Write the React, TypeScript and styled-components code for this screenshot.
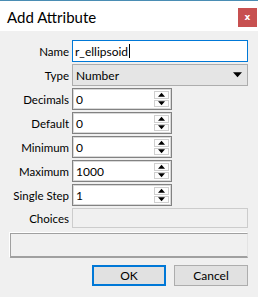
import React from "react";
import styled, { createGlobalStyle } from "styled-components";

const GlobalStyle = createGlobalStyle`
  html, body {
    margin: 0;
    padding: 0;
    background: #f0f0f0;
  }
  * {
    box-sizing: border-box;
  }
`;

const Window = styled.div`
  width: 258px;
  height: 297px;
  background: #f0f0f0;
  border-top: 1px solid #4a8db4;
  font-family: Lato, "Liberation Sans", sans-serif;
  font-size: 12px;
  color: #000;
  display: flex;
  flex-direction: column;
`;

const TitleBar = styled.div`
  height: 30px;
  background: #fff;
  display: flex;
  align-items: flex-start;
  padding-left: 7px;
`;

const Title = styled.span`
  font-size: 15px;
  line-height: 15px;
  margin-top: 9px;
`;

const CloseButton = styled.div`
  margin-left: auto;
  margin-top: 7px;
  margin-right: 1px;
  width: 19px;
  height: 19px;
  background: #c75050;
  color: #fff;
  font-family: "DejaVu Sans", sans-serif;
  font-weight: bold;
  font-size: 9px;
  line-height: 18px;
  text-align: center;
`;

const Body = styled.div`
  padding: 9px 10px 0 10px;
  display: flex;
  flex-direction: column;
`;

const Form = styled.div`
  display: grid;
  grid-template-columns: 59px 1fr;
  column-gap: 3px;
  row-gap: 2px;
  align-items: center;
`;

const Label = styled.span`
  text-align: right;
  white-space: nowrap;
  font-size: 11.5px;
`;

const LineEdit = styled.div<{ focused?: boolean; disabled?: boolean }>`
  height: ${(p) => (p.disabled ? "20px" : "22px")};
  border: 1px solid ${(p) => (p.focused ? "#0078d7" : p.disabled ? "#cccccc" : "#7a7a7a")};
  background: ${(p) => (p.disabled ? "#f0f0f0" : "#fff")};
  display: flex;
  align-items: center;
  padding-left: 2px;
`;

const Caret = styled.span`
  display: inline-block;
  width: 1px;
  height: 14px;
  background: #000;
  margin-left: 1px;
`;

const Combo = styled.div`
  height: 22px;
  border: 1px solid #adadad;
  background: #e5e5e5;
  display: flex;
  align-items: center;
  justify-content: space-between;
  padding: 0 5px 0 3px;
`;

const SpinBox = styled.div`
  width: 100px;
  height: 22px;
  border: 1px solid #828282;
  box-shadow: inset 0 0 0 1px #d9d9d9;
  background: #fff;
  display: flex;
  align-items: center;
  padding: 2px;
`;

const SpinValue = styled.span`
  flex: 1;
  padding-left: 1px;
`;

const SpinButtons = styled.div`
  width: 15px;
  height: 16px;
  display: flex;
  flex-direction: column;
  gap: 1px;
`;

const SpinButton = styled.div`
  flex: 1;
  border: 1px solid #cfcfcf;
  background: #fdfdfd;
  display: flex;
  align-items: center;
  justify-content: center;
`;

const Frame = styled.div`
  margin-top: 5px;
  height: 25px;
  border-top: 1px solid #a0a0a0;
  border-left: 1px solid #a0a0a0;
  border-right: 1px solid #e3e3e3;
  border-bottom: 2px solid #a0a0a0;
  box-shadow: -1px -1px 0 #fff;
`;

const ButtonRow = styled.div`
  margin-top: 7px;
  display: flex;
  justify-content: flex-end;
  gap: 8px;
`;

const Button = styled.div<{ primary?: boolean }>`
  width: 74px;
  height: 21px;
  background: #e1e1e1;
  border: ${(p) => (p.primary ? "2px solid #0078d7" : "1px solid #adadad")};
  display: flex;
  align-items: center;
  justify-content: center;
`;

const Arrow = ({ down, size = 7 }: { down?: boolean; size?: number }) => (
  <svg width={size} height={Math.ceil(size / 2) + 1} viewBox="0 0 8 5">
    {down ? <polygon points="0,0 8,0 4,4.5" fill="#000" /> : <polygon points="0,5 8,5 4,0.5" fill="#000" />}
  </svg>
);

const Spin = ({ value }: { value: string }) => (
  <SpinBox>
    <SpinValue>{value}</SpinValue>
    <SpinButtons>
      <SpinButton>
        <Arrow size={7} />
      </SpinButton>
      <SpinButton>
        <Arrow size={7} down />
      </SpinButton>
    </SpinButtons>
  </SpinBox>
);

const spins = [
  ["Decimals", "0"],
  ["Default", "0"],
  ["Minimum", "0"],
  ["Maximum", "1000"],
  ["Single Step", "1"],
];

export default function App() {
  return (
    <>
      <GlobalStyle />
      <Window>
        <TitleBar>
          <Title>Add Attribute</Title>
          <CloseButton>x</CloseButton>
        </TitleBar>
        <Body>
          <Form>
            <Label>Name</Label>
            <LineEdit focused>
              r_ellipsoid
              <Caret />
            </LineEdit>
            <Label>Type</Label>
            <Combo>
              <span>Number</span>
              <Arrow size={9} down />
            </Combo>
            {spins.map(([label, value]) => (
              <React.Fragment key={label}>
                <Label>{label}</Label>
                <Spin value={value} />
              </React.Fragment>
            ))}
            <Label>Choices</Label>
            <LineEdit disabled />
          </Form>
          <Frame />
          <ButtonRow>
            <Button primary>OK</Button>
            <Button>Cancel</Button>
          </ButtonRow>
        </Body>
      </Window>
    </>
  );
}
